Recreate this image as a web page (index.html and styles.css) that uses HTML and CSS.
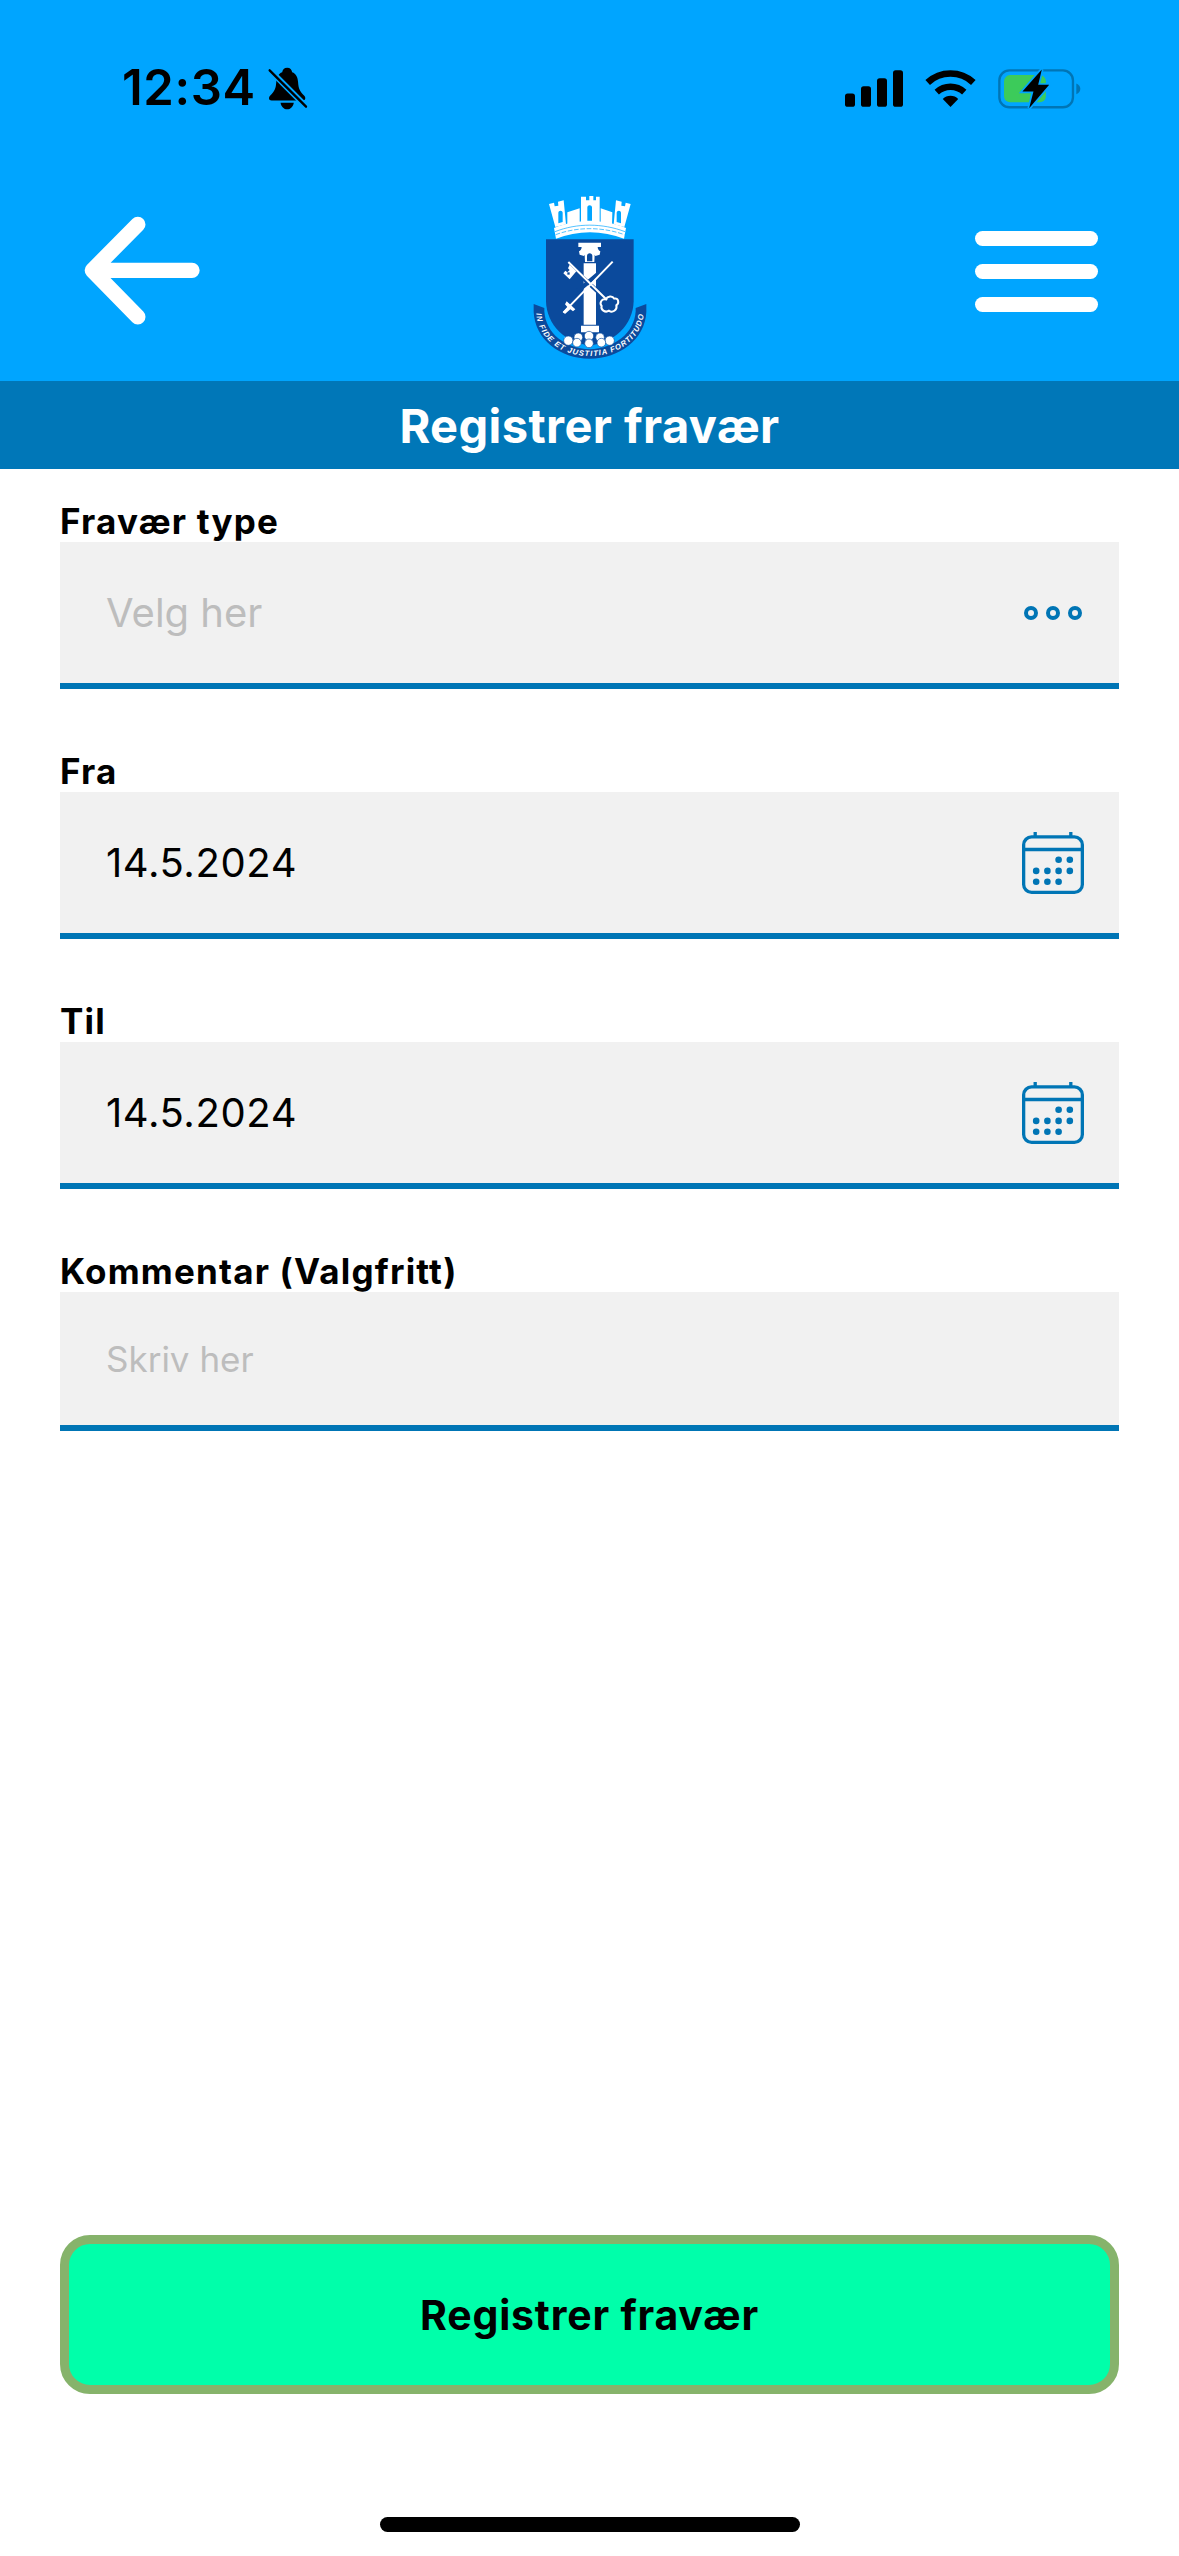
FILE: index.html
```html
<!DOCTYPE html>
<html lang="no">
<head>
    <meta charset="UTF-8">
    <meta name="viewport" content="width=device-width, initial-scale=1.0">
    <title>Registrer fravær</title>
    <link rel="stylesheet" href="styles.css">
</head>
<body>
    <div class="page">
        <header class="header">
            <div class="status">
                <div class="status-left">
                    <span class="time">12:34</span>
                    <svg class="bell" viewBox="798 80 122 130">
                        <path fill="#000" d="M858 82c-9 0-14 6-15 14-12 4-17 16-18 30-1 18-5 28-18 40-6 6-5 15 4 15h94c9 0 10-9 4-15-13-12-17-22-18-40-1-14-6-26-18-30-1-8-6-14-15-14z"/>
                        <path fill="#000" d="M838 188c2 12 10 20 20 20s18-8 20-20z"/>
                        <path stroke="#00a5ff" stroke-width="18" d="M800 84l118 118"/>
                        <path stroke="#000" stroke-width="7" stroke-linecap="round" d="M805 90l110 110"/>
                    </svg>
                </div>
                <div class="status-right">
                    <svg class="signal" viewBox="138 87 174 110">
                        <rect x="138" y="157" width="30" height="40" rx="8"/>
                        <rect x="186" y="135" width="30" height="62" rx="8"/>
                        <rect x="234" y="111" width="30" height="86" rx="8"/>
                        <rect x="282" y="87" width="30" height="110" rx="8"/>
                    </svg>
                    <svg class="wifi" viewBox="378 87 152 110">
                        <path fill="none" stroke="#000" stroke-width="20" d="M386 124a100 100 0 0 1 136 0"/>
                        <path fill="none" stroke="#000" stroke-width="19" d="M413 153a60 60 0 0 1 82 0"/>
                        <path fill="#000" d="M454 197l-23-24a33 33 0 0 1 46 0z"/>
                    </svg>
                    <svg class="battery" viewBox="597 80 248 122">
                        <rect x="601" y="87" width="220" height="110" rx="30" fill="none" stroke="#0075b5" stroke-width="7"/>
                        <rect x="615" y="101" width="125" height="81" rx="18" fill="#3ccb5a"/>
                        <path fill="#0075b5" d="M831 126c8 3 12 9 12 16s-4 13-12 16z"/>
                        <path class="bolt" d="M728 84l-58 66h33l-13 50 60-70h-33z"/>
                    </svg>
                </div>
            </div>
            <nav class="nav">
                <svg class="back" viewBox="250 530 352 330">
                    <path fill="none" stroke="#fff" stroke-width="46" stroke-linecap="round" stroke-linejoin="round" d="M415 555L278 693L415 833M278 693H578"/>
                </svg>
                <svg class="logo" viewBox="0 0 540 570">
                    <!-- ribbon -->
                    <path fill="#0b4a9c" d="M98 372l32 12v10c4 66 62 112 136 114 74-2 134-48 138-114v-10l32-12v24c-4 82-80 140-170 140s-164-58-168-140z"/>
                    <!-- crown -->
                    <g fill="#fff">
                        <path d="M144 72l15-4 2 11 11-2-1-12 17-4 7 72-32 8z"/>
                        <path d="M240 50h15v11h10V48h12v13h8V50h11v80h-56z"/>
                        <path d="M389 72l-15-4-2 11-11-2 1-12-17-4-7 72 32 8z"/>
                        <path d="M199 97l37-12v46l-37 6zM299 85l35 12-1 40-34-6z"/>
                        <path d="M159 144c66-28 150-28 216 0l-6 32c-64-26-140-26-204 0z"/>
                    </g>
                    <path fill="#00a5ff" d="M172 130V98c0-8 13-8 13 0v28zM259 122V82c0-8 14-8 14 0v40zM347 98c0-8 13-8 13 0v32l-13-4z"/>
                    <path fill="none" stroke="#00a5ff" stroke-width="2" d="M162 155c66-26 142-26 210 0"/>
                    <path fill="none" stroke="#00a5ff" stroke-width="2" stroke-dasharray="14 5" d="M164 164c64-24 140-24 206 0"/>
                    <!-- shield -->
                    <path fill="#0b4a9c" d="M135 178h263v186c-2 72-60 126-132 132-72-6-129-60-131-132z"/>
                    <!-- column -->
                    <path fill="#fff" d="M232 188h68v13h-10c0 6 4 11 8 13l-2 10-13 4-2-4-1 22h-28l-1-22-2 4-13-4-2-10c4-2 8-7 8-13h-10z"/>
                    <path fill="#0b4a9c" d="M258 244v-16c0-11 16-11 16 0v16z"/>
                    <path fill="#fff" d="M248 250h37v184h-37zM240 437h54v20h-54z"/>
                    <!-- stones -->
                    <g fill="#fff" stroke="#0b4a9c" stroke-width="2">
                        <circle cx="232" cy="472" r="13"/><circle cx="264" cy="468" r="14"/><circle cx="297" cy="472" r="13"/>
                        <circle cx="202" cy="482" r="14"/><circle cx="326" cy="482" r="14"/>
                        <circle cx="228" cy="488" r="13"/><circle cx="264" cy="490" r="13"/><circle cx="301" cy="488" r="13"/>
                    </g>
                    <!-- key and sword -->
                    <path fill="none" stroke="#0b4a9c" stroke-width="13" d="M222 340L335 245M212 262L318 360"/>
                    <path fill="none" stroke="#fff" stroke-width="6" d="M187 398L335 245M202 246L318 360"/>
                    <path fill="#fff" d="M197 364l26 24-7 6-8-6-16 14-6-6 13-15-7-8z"/>
                    <path fill="#fff" d="M206 254l20 20-20 24-19-18 6-8 6 5 7-7-5-5z"/>
                    <path fill="#0b4a9c" d="M199 277h7v7h-7z"/>
                    <path fill="none" stroke="#fff" stroke-width="6" d="M314 358c6-10 20-12 26-2 12-4 16 14 6 20 4 14-12 24-22 16-12 8-26-4-22-14-8-10 0-22 12-20z"/>
                    <!-- motto -->
                    <path id="motto-path" fill="none" d="M106 400c6 80 78 128 160 128s156-48 162-128"/>
                    <text class="motto"><textPath href="#motto-path" textLength="450" lengthAdjust="spacing">IN FIDE ET JUSTITIA FORTITUDO</textPath></text>
                </svg>
                <div class="menu">
                    <span class="menu-bar"></span>
                    <span class="menu-bar"></span>
                    <span class="menu-bar"></span>
                </div>
            </nav>
        </header>

        <div class="title-bar">Registrer fravær</div>

        <main class="form">
            <div class="group">
                <div class="label">Fravær type</div>
                <div class="field">
                    <span class="placeholder">Velg her</span>
                    <svg class="dots" viewBox="0 0 58 14">
                        <circle cx="7" cy="7" r="5"/>
                        <circle cx="29" cy="7" r="5"/>
                        <circle cx="51" cy="7" r="5"/>
                    </svg>
                </div>
            </div>
            <div class="group">
                <div class="label">Fra</div>
                <div class="field">
                    <span class="value">14.5.2024</span>
                    <svg class="calendar" viewBox="185 782 188 188">
                        <use href="#calendar-icon"/>
                    </svg>
                </div>
            </div>
            <div class="group">
                <div class="label">Til</div>
                <div class="field">
                    <span class="value">14.5.2024</span>
                    <svg class="calendar" viewBox="185 782 188 188">
                        <g id="calendar-icon">
                            <rect x="190" y="797" width="178" height="168" rx="24" fill="none" stroke="#0075b5" stroke-width="10"/>
                            <path stroke="#0075b5" stroke-width="10" d="M190 835h178M225 782v15M333 782v15"/>
                            <g fill="#0075b5">
                                <circle cx="296" cy="866" r="10"/><circle cx="330" cy="866" r="10"/>
                                <circle cx="228" cy="900" r="10"/><circle cx="262" cy="900" r="10"/><circle cx="296" cy="900" r="10"/><circle cx="330" cy="900" r="10"/>
                                <circle cx="228" cy="933" r="10"/><circle cx="262" cy="933" r="10"/><circle cx="296" cy="933" r="10"/>
                            </g>
                        </g>
                    </svg>
                </div>
            </div>
            <div class="group">
                <div class="label">Kommentar (Valgfritt)</div>
                <div class="field field-short">
                    <span class="placeholder placeholder-small">Skriv her</span>
                </div>
            </div>
        </main>

        <div class="actions">
            <button class="submit" type="button">Registrer fravær</button>
        </div>
        <div class="home-area">
            <div class="home-bar"></div>
        </div>
    </div>
</body>
</html>
```

FILE: styles.css
```css
* {
    box-sizing: border-box;
}
body {
    margin: 0;
    font-family: Inter, "Liberation Sans", sans-serif;
    background-color: #fff;
    color: #000;
}
.page {
    display: flex;
    flex-direction: column;
    height: 2556px;
}
.header {
    height: 381px;
    background-color: #00a5ff;
}
.status {
    display: flex;
    justify-content: space-between;
    align-items: center;
    height: 180px;
    padding: 58px 98px 62px 122px;
}
.status-left {
    display: flex;
    align-items: center;
    gap: 11px;
}
.time {
    font-size: 49px;
    font-weight: 600;
    line-height: 60px;
    letter-spacing: 0.6px;
}
.bell {
    width: 41px;
    height: 43px;
}
.status-right {
    display: flex;
    align-items: center;
    gap: 22px;
}
.signal {
    width: 58px;
    height: 37px;
}
.wifi {
    width: 51px;
    height: 37px;
}
.battery {
    width: 83px;
    height: 41px;
}
.bolt {
    fill: #000;
    stroke: #00a5ff;
    stroke-width: 10;
    paint-order: stroke;
}
.nav {
    display: grid;
    grid-template-columns: 1fr 180px 1fr;
    align-items: center;
    height: 190px;
    padding: 0 81px 0 83px;
}
.back {
    width: 117px;
    height: 110px;
    margin-bottom: 8px;
}
.logo {
    width: 180px;
    height: 190px;
}
.motto {
    font-size: 23px;
    font-style: italic;
    font-weight: 700;
    font-family: "Liberation Sans", sans-serif;
    fill: #fff;
}
.menu {
    display: flex;
    flex-direction: column;
    gap: 18px;
    justify-self: end;
    width: 123px;
    margin-bottom: 8px;
}
.menu-bar {
    height: 15px;
    border-radius: 8px;
    background-color: #fff;
}
.title-bar {
    display: flex;
    justify-content: center;
    align-items: center;
    height: 88px;
    background-color: #0077b8;
    color: #fff;
    font-size: 47px;
    font-weight: 700;
    letter-spacing: 0.4px;
}
.form {
    flex: 1;
    display: flex;
    flex-direction: column;
    gap: 60px;
    padding: 30px 60px 0;
}
.label {
    height: 43px;
    font-size: 35px;
    font-weight: 700;
    line-height: 44px;
    letter-spacing: 1.2px;
}
.field {
    display: flex;
    justify-content: space-between;
    align-items: center;
    height: 147px;
    padding: 0 35px 0 46px;
    background-color: #f1f1f1;
    border-bottom: 6px solid #0075b5;
}
.field-short {
    height: 139px;
}
.placeholder {
    font-size: 40px;
    color: #bdbdbd;
}
.placeholder-small {
    font-size: 35px;
}
.value {
    font-size: 40px;
    letter-spacing: 0.6px;
}
.dots {
    width: 58px;
    height: 14px;
    margin-right: 2px;
}
.dots circle {
    fill: none;
    stroke: #0075b5;
    stroke-width: 4;
}
.calendar {
    width: 62px;
    height: 62px;
}
.actions {
    padding: 0 60px;
}
.submit {
    display: block;
    width: 100%;
    height: 159px;
    padding: 0;
    border: 9px solid #86b36b;
    border-radius: 30px;
    background-color: #00ffaa;
    color: #000;
    font-family: inherit;
    font-size: 41px;
    font-weight: 700;
    letter-spacing: 0.8px;
}
.home-area {
    display: flex;
    justify-content: center;
    height: 162px;
    padding-top: 123px;
}
.home-bar {
    width: 420px;
    height: 15px;
    border-radius: 8px;
    background-color: #000;
}
```
